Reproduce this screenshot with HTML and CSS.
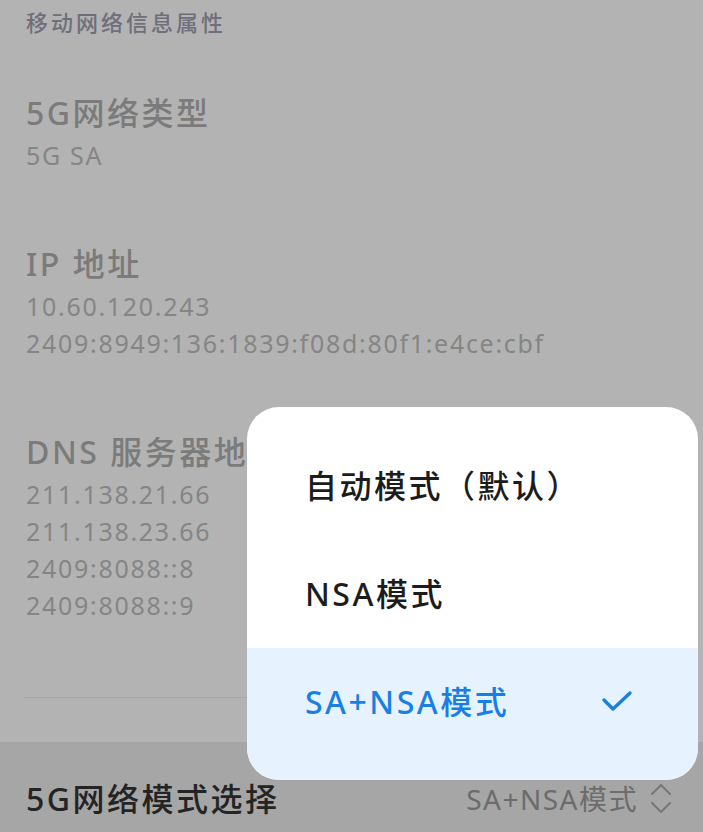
FILE: index.html
```html
<!DOCTYPE html>
<html lang="zh-CN">
<head>
  <meta charset="UTF-8" />
  <meta name="viewport" content="width=device-width, initial-scale=1.0"/>
  <title>移动网络信息属性</title>
  <link rel="stylesheet" href="styles.css">
</head>
<body>

  <div class="page">
    <div class="section-title">移动网络信息属性</div>

    <div class="info-item">
      <div class="info-title">5G网络类型</div>
      <div class="info-value">5G SA</div>
    </div>

    <div class="info-item">
      <div class="info-title">IP 地址</div>
      <div class="info-value">10.60.120.243</div>
      <div class="info-value">2409:8949:136:1839:f08d:80f1:e4ce:cbf</div>
    </div>

    <div class="info-item">
      <div class="info-title">DNS 服务器地址</div>
      <div class="info-value">211.138.21.66</div>
      <div class="info-value">211.138.23.66</div>
      <div class="info-value">2409:8088::8</div>
      <div class="info-value">2409:8088::9</div>
    </div>

    <div class="divider"></div>

    <div class="select-row">
      <div class="select-label">5G网络模式选择</div>
      <div class="select-value">
        SA+NSA模式
        <svg class="updown" width="22" height="32" viewBox="0 0 22 32">
          <path d="M2 11 L11 2 L20 11" />
          <path d="M2 20 L11 29 L20 20" />
        </svg>
      </div>
    </div>
  </div>

  <!-- dropdown menu -->
  <div class="menu">
    <div class="menu-item">自动模式（默认）</div>
    <div class="menu-item">NSA模式</div>
    <div class="menu-item selected">
      SA+NSA模式
      <svg class="check" width="32" height="24" viewBox="0 0 32 24">
        <path d="M3 10 L12 19 L29 3" />
      </svg>
    </div>
  </div>

</body>
</html>
```

FILE: styles.css
```css
* {margin: 0;padding: 0;box-sizing: border-box;}

body {
  font-family: "Noto Sans", "Noto Sans CJK SC", sans-serif;
  background: #b3b3b3;
  width: 703px;
  height: 832px;
  overflow: hidden;
  position: relative;
}

.page {
  display: flex;
  flex-direction: column;
}

.section-title {
  padding-left: 26px;
  font-size: 22px;
  line-height: 44px;
  color: #6f6f7c;
  letter-spacing: 3px;
  font-weight: 500;
}

.info-item {
  padding-left: 26px;
  margin-top: 45px;
}
.info-item + .info-item {margin-top: 66px;}

.info-title {
  font-size: 32px;
  line-height: 48px;
  color: #7b7b7b;
  letter-spacing: 2.5px;
  font-weight: 500;
  white-space: nowrap;
}

.info-value {
  font-size: 25px;
  line-height: 37px;
  color: #858585;
  letter-spacing: 1.7px;
}

.divider {
  height: 1px;
  background: #a6a6a6;
  margin: 73px 26px 0 24px;
}

.select-row {
  margin-top: 44px;
  background: #a6a6a6;
  height: 100px;
  padding: 37px 31px 0 26px;
  display: flex;
  justify-content: space-between;
  align-items: flex-start;
}

.select-label {
  font-size: 32px;
  line-height: 40px;
  font-weight: 500;
  letter-spacing: 2.5px;
  color: #242424;
}

.select-value {
  display: flex;
  align-items: center;
  gap: 12px;
  font-size: 28px;
  line-height: 40px;
  letter-spacing: 1.5px;
  color: #6c6c6c;
}

.updown path {
  fill: none;
  stroke: #777;
  stroke-width: 2;
  stroke-linecap: round;
  stroke-linejoin: round;
}

/* Popup menu */
.menu {
  position: absolute;
  left: 247px;
  top: 407px;
  width: 451px;
  height: 373px;
  background: #fff;
  border-radius: 32px;
  overflow: hidden;
  padding-top: 25px;
}

.menu-item {
  height: 108px;
  line-height: 108px;
  padding: 0 65px 0 58px;
  font-size: 32px;
  font-weight: 500;
  letter-spacing: 2.5px;
  color: #1c1c1c;
  display: flex;
  align-items: center;
  justify-content: space-between;
}

.menu-item.selected {
  height: 132px;
  padding-bottom: 24px;
  background: #e6f2fd;
  color: #1a7fe3;
}

.check path {
  fill: none;
  stroke: #1a7fe3;
  stroke-width: 3.4;
  stroke-linecap: round;
  stroke-linejoin: round;
}
```
